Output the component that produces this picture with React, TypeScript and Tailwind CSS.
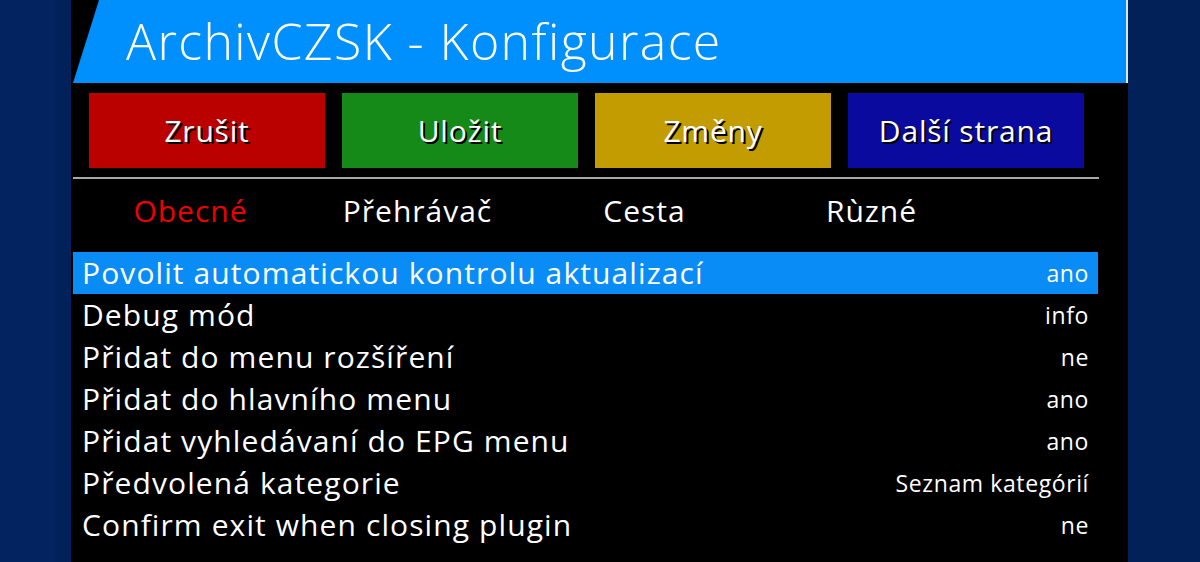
const buttons = [
  { label: "Zrušit", bg: "bg-[#bb0000]" },
  { label: "Uložit", bg: "bg-[#168a19]" },
  { label: "Změny", bg: "bg-[#c29c00]" },
  { label: "Další strana", bg: "bg-[#0a0a9f]" },
];

const tabs = ["Obecné", "Přehrávač", "Cesta", "Rùzné"];

const rows = [
  { label: "Povolit automatickou kontrolu aktualizací", value: "ano" },
  { label: "Debug mód", value: "info" },
  { label: "Přidat do menu rozšíření", value: "ne" },
  { label: "Přidat do hlavního menu", value: "ano" },
  { label: "Přidat vyhledávaní do EPG menu", value: "ano" },
  { label: "Předvolená kategorie", value: "Seznam kategórií" },
  { label: "Confirm exit when closing plugin", value: "ne" },
];

export default function App() {
  return (
    <div className="flex h-[562px] w-[1200px] overflow-hidden bg-[#012158] font-['Open_Sans',sans-serif] text-white">
      <div className="w-[55px] bg-[#032360]" />
      <div className="w-[16px] bg-[#01215a]" />
      <div className="flex w-[1057px] flex-col bg-black">
        <div className="flex h-[83px] items-center border-r-2 border-[#d8e8f5] bg-[#0090fe] pb-[2px] pl-[55px] [clip-path:polygon(28px_0,100%_0,100%_100%,2px_100%)]">
          <h1 className="text-[50px] font-light leading-none tracking-[1.4px] text-white">
            ArchivCZSK - Konfigurace
          </h1>
        </div>

        <div className="ml-[18px] mt-[10px] flex gap-[17px]">
          {buttons.map((b) => (
            <div
              key={b.label}
              className={`flex h-[75px] w-[236px] items-center justify-center ${b.bg}`}
            >
              <span className="text-[30px] leading-none tracking-[0.8px] [text-shadow:2px_2px_0_#000]">
                {b.label}
              </span>
            </div>
          ))}
        </div>

        <div className="ml-[2px] mt-[9px] h-[2px] w-[1026px] bg-[#a8a8a8]" />

        <div className="ml-[6px] grid h-[64px] grid-cols-[227px_227px_227px_227px] items-center">
          {tabs.map((t, i) => (
            <span
              key={t}
              className={`text-center text-[30px] leading-none tracking-[1px] ${i === 0 ? "text-[#ee0000]" : "text-white"}`}
            >
              {t}
            </span>
          ))}
        </div>

        <div className="ml-[2px] mt-[9px] flex w-[1025px] flex-col">
          {rows.map((r, i) => (
            <div
              key={r.label}
              className={`flex h-[42px] items-center justify-between pl-[9px] pr-[9px] ${i === 0 ? "bg-[#0a8cf6]" : ""}`}
            >
              <span className="text-[30px] leading-none tracking-[1.1px]">{r.label}</span>
              <span className="text-[23px] leading-none tracking-[0.6px]">{r.value}</span>
            </div>
          ))}
        </div>
      </div>
    </div>
  );
}
